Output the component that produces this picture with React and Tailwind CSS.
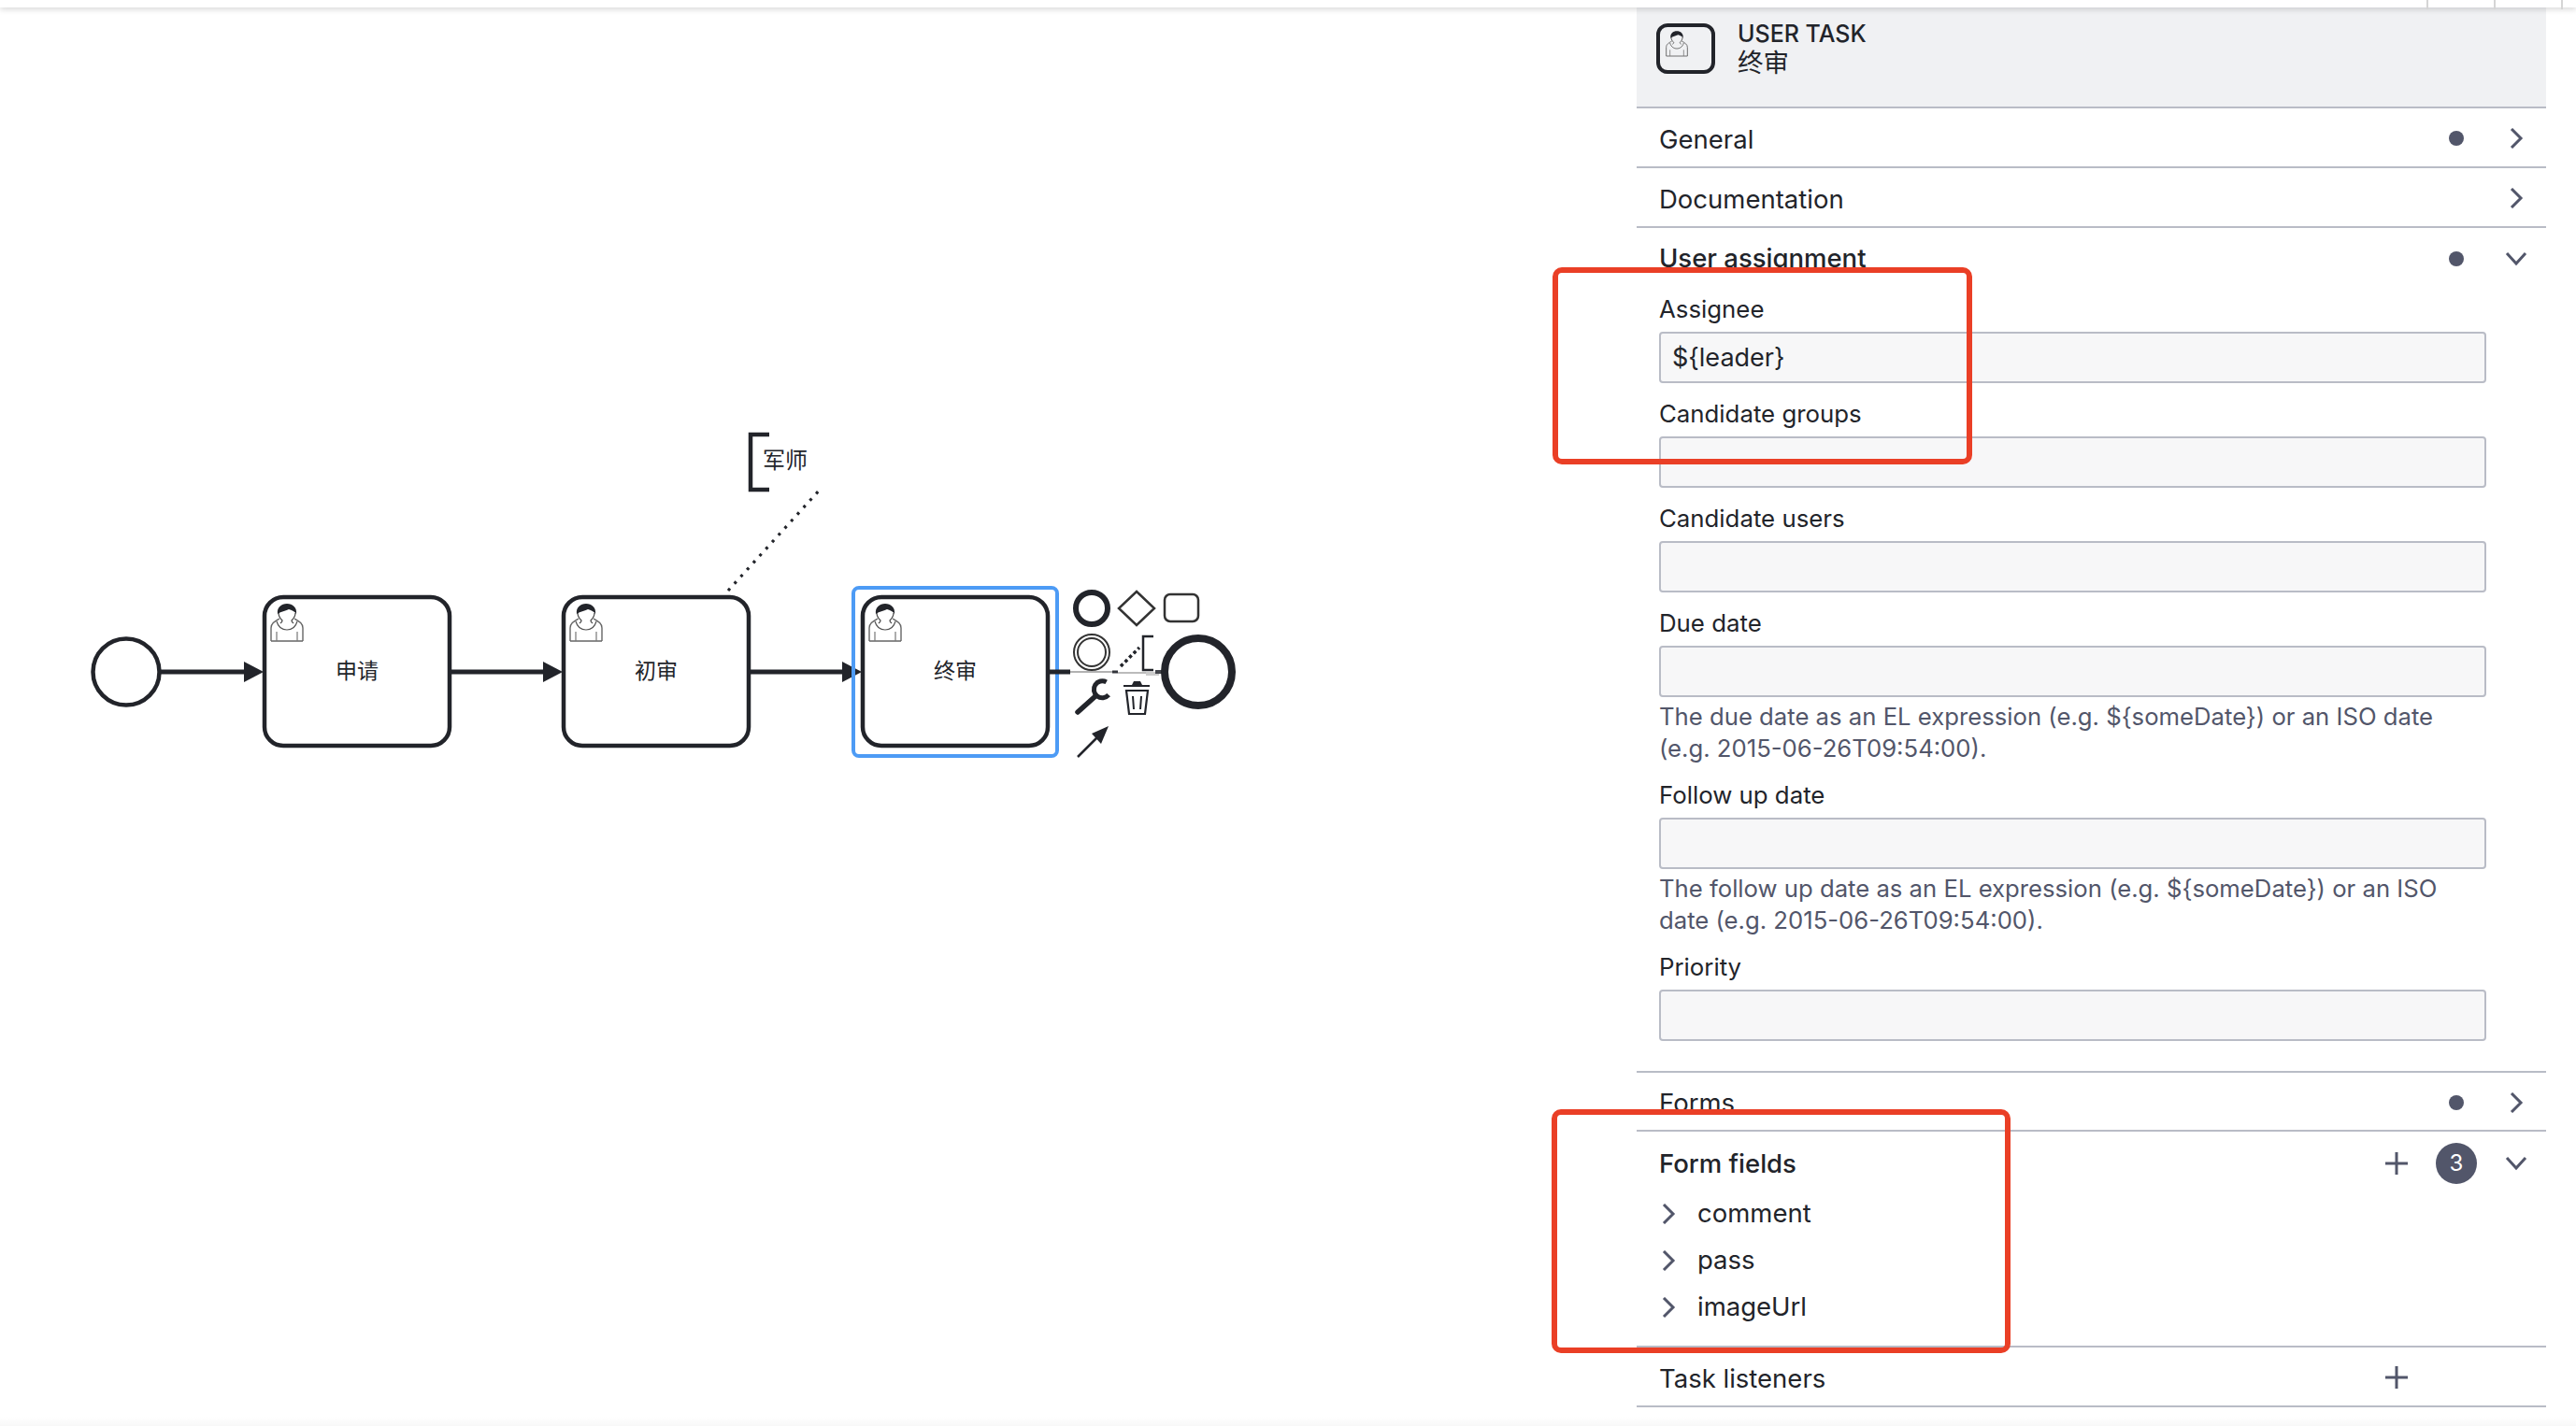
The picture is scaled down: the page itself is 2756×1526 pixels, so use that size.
import React from "react";

const Chevron = ({ down, className = "" }) =>
  down ? (
    <svg width="24" height="16" viewBox="0 0 24 16" className={className}>
      <path d="M2 2 L12 13 L22 2" fill="none" stroke="#52566a" strokeWidth="3" />
    </svg>
  ) : (
    <svg width="16" height="22" viewBox="0 0 16 22" className={className}>
      <path d="M3 1 L13 11 L3 21" fill="none" stroke="#52566a" strokeWidth="3" />
    </svg>
  );

const Plus = () => (
  <svg width="24" height="24" viewBox="0 0 24 24">
    <path d="M12 0 V24 M0 12 H24" stroke="#52566a" strokeWidth="3" />
  </svg>
);

const Dot = () => <span className="w-4 h-4 rounded-full bg-[#52566a]" />;

const UserIcon = ({ x, y, s = 1 }) => (
  <g transform={`translate(${x} ${y}) scale(${s})`} fill="none">
    <path d="M1 40 V26 C1 21 5 19 10 16 M35 40 V26 C35 21 31 19 26 16 M1 40 H35" stroke="#666" strokeWidth="1.4" />
    <path d="M7 30 V40 M29 30 V40" stroke="#777" strokeWidth="1.2" />
    <path d="M7 19 C9 26 14 28 18 28 C22 28 27 26 29 19" stroke="#555" strokeWidth="1.2" />
    <path d="M9 10 C9 14 11 16 13 18 C13 20 12 20 11 21 M27 10 C27 14 25 16 23 18 C23 20 24 20 25 21" stroke="#444" strokeWidth="1.2" />
    <path d="M8 11 C7 4 12 0 18 0 C24 0 29 4 28 11 C26 8 23 7 20 6 C16 8 12 8 8 11 Z" fill="#22242a" />
  </g>
);

const Flow = ({ x1, x2 }) => (
  <g>
    <line x1={x1} y1="719" x2={x2 - 18} y2="719" stroke="#22242a" strokeWidth="5" />
    <polygon points={`${x2 - 20},708 ${x2 + 1},719 ${x2 - 20},730`} fill="#22242a" />
  </g>
);

const Task = ({ x, label }) => (
  <g>
    <rect x={x + 2} y="639" width="198" height="159" rx="20" fill="#fff" stroke="#22242a" strokeWidth="4.5" />
    <UserIcon x={x + 8} y="646" />
    <text x={x + 101} y="726" textAnchor="middle" fontSize="23" fill="#22242a" fontFamily="Inter, 'Noto Sans CJK SC', sans-serif">
      {label}
    </text>
  </g>
);

const Diagram = () => (
  <svg width="1751" height="1518" viewBox="0 8 1751 1518" className="block">
    <circle cx="135" cy="719" r="35.5" fill="#fff" stroke="#22242a" strokeWidth="4.5" />
    <Task x={281} label="申请" />
    <Task x={601} label="初审" />
    <Task x={921} label="终审" />
    <Flow x1={172} x2={281} />
    <Flow x1={483} x2={601} />
    <Flow x1={802} x2={921} />

    <path d="M823 465 H803 V524 H823" fill="none" stroke="#22242a" strokeWidth="4.5" />
    <text x="816" y="501" fontSize="24" fill="#22242a" fontFamily="Inter, 'Noto Sans CJK SC', sans-serif">
      军师
    </text>
    <line x1="779" y1="632" x2="878" y2="523" stroke="#22242a" strokeWidth="3.2" strokeDasharray="3 7" />

    <rect x="913" y="629" width="218" height="180" rx="6" fill="none" stroke="#4d9bf5" strokeWidth="4" />

    {/* outgoing flow fades under the context pad */}
    <line x1="1123" y1="719" x2="1145" y2="719" stroke="#22242a" strokeWidth="5" />
    <line x1="1145" y1="719" x2="1195" y2="719" stroke="#999" strokeWidth="1.5" />
    <line x1="1190" y1="719" x2="1196" y2="719" stroke="#33353b" strokeWidth="3" />
    <line x1="1196" y1="720" x2="1226" y2="720" stroke="#bbb" strokeWidth="2" />
    <line x1="1226" y1="721" x2="1240" y2="721" stroke="#ccc" strokeWidth="4" />
    <line x1="1236" y1="719" x2="1244" y2="719" stroke="#44464c" strokeWidth="4" />
    <circle cx="1282" cy="719" r="36" fill="#fff" stroke="#22242a" strokeWidth="8" />

    {/* context pad */}
    <circle cx="1168" cy="651" r="17" fill="#fff" stroke="#22242a" strokeWidth="6" />
    <polygon points="1216,633 1235,651 1216,669 1197,651" fill="#fff" stroke="#333" strokeWidth="2.5" />
    <rect x="1246" y="636" width="36" height="29" rx="6" fill="#fff" stroke="#333" strokeWidth="2.5" />
    <circle cx="1168" cy="698" r="19" fill="none" stroke="#333" strokeWidth="2" />
    <circle cx="1168" cy="698" r="15" fill="none" stroke="#333" strokeWidth="2" />
    <line x1="1199" y1="713" x2="1219" y2="693" stroke="#22242a" strokeWidth="3.5" strokeDasharray="3.5 3" />
    <path d="M1234 681 H1223 V717 H1234" fill="none" stroke="#22242a" strokeWidth="2.5" />
    <path d="M1185 731 A9 9 0 1 0 1185 745" fill="none" stroke="#22242a" strokeWidth="5" transform="rotate(-10 1178 738)" />
    <line x1="1172" y1="745" x2="1153" y2="762" stroke="#22242a" strokeWidth="5.5" strokeLinecap="round" />
    <path d="M1211 733 L1213 729 H1220 L1222 733 H1230 V735 H1202 V733 Z" fill="#22242a" />
    <path d="M1205 739 L1208 764 H1225 L1228 739 Z" fill="#fff" stroke="#22242a" strokeWidth="2.2" />
    <path d="M1212 745 L1213 759 M1221 745 L1220 759" stroke="#22242a" strokeWidth="2" />
    <line x1="1153" y1="810" x2="1175" y2="788" stroke="#22242a" strokeWidth="2.5" />
    <polygon points="1186,777 1168,785 1178,796" fill="#22242a" />
  </svg>
);

const Section = ({ title, h = "h-[64px]", children }) => (
  <div className={`flex items-center justify-between border-b-2 border-[#b9bcc6] pl-[24px] ${h}`}>
    <span className="pt-[5px] text-[#22242a]">{title}</span>
    <div className="flex items-center pt-[2px]">{children}</div>
  </div>
);

const Field = ({ label, value, help, mt }) => (
  <div className={mt}>
    <label className="block h-[41px] text-[25.8px] leading-[34px] text-[#22242a]">{label}</label>
    <div className="h-[55px] w-[885px] rounded border-2 border-[#b9bcc6] bg-[#f7f7f8] px-[12px] text-[27px] leading-[51px] text-[#22242a]">
      {value}
    </div>
    {help && <p className="mt-[4px] w-[885px] text-[25.7px] leading-[34px] text-[#52566a]">{help}</p>}
  </div>
);

const Item = ({ name, h }) => (
  <div className={`flex items-center pl-[26px] ${h}`}>
    <Chevron />
    <span className="ml-[23px] text-[#22242a]">{name}</span>
  </div>
);

export default function App() {
  return (
    <div className="relative h-[1526px] w-[2756px] overflow-hidden bg-white text-[27.5px] font-['Inter','Noto_Sans_CJK_SC',sans-serif]">
      <div className="relative z-10 flex h-[8px] shadow-[0_2px_6px_rgba(0,0,0,0.16)] bg-white">
        <div className="w-[2596px]" />
        <div className="h-[10px] w-[2px] bg-[#d5d5d5]" />
        <div className="w-[70px]" />
        <div className="h-[10px] w-[2px] bg-[#d5d5d5]" />
        <div className="w-[70px]" />
        <div className="h-[10px] w-[2px] bg-[#d5d5d5]" />
      </div>

      <div className="flex">
        <Diagram />

        <div className="w-[973px]">
          <div className="flex h-[108px] items-start border-b-2 border-[#b9bcc6] bg-[#f0f1f3] pl-[21px] pt-[17px]">
            <div className="flex h-[54px] w-[63px] rounded-[12px] border-4 border-[#22242a] pl-[6px] pt-[4px]">
              <svg width="24" height="28" viewBox="0 0 36 41">
                <UserIcon x={0} y={0} />
              </svg>
            </div>
            <div className="ml-[24px] -mt-[6px]">
              <div className="text-[25px] leading-[34px] font-medium text-[#22242a]">USER TASK</div>
              <div className="leading-[28px] text-[#22242a]">终审</div>
            </div>
          </div>

          <Section title="General">
            <Dot />
            <Chevron className="ml-[48px] mr-[24px]" />
          </Section>
          <Section title="Documentation">
            <Chevron className="mr-[24px]" />
          </Section>

          <div className="flex h-[66px] items-center justify-between pl-[24px]">
            <span className="font-medium text-[#22242a]">User assignment</span>
            <div className="flex items-center">
              <Dot />
              <Chevron down className="ml-[44px] mr-[20px]" />
            </div>
          </div>

          <div className="pl-[24px]">
            <Field label="Assignee" value="${leader}" mt="mt-[4px]" />
            <Field label="Candidate groups" mt="mt-[16px]" />
            <Field label="Candidate users" mt="mt-[16px]" />
            <Field
              label="Due date"
              mt="mt-[16px]"
              help="The due date as an EL expression (e.g. ${someDate}) or an ISO date (e.g. 2015-06-26T09:54:00)."
            />
            <Field
              label="Follow up date"
              mt="mt-[16px]"
              help="The follow up date as an EL expression (e.g. ${someDate}) or an ISO date (e.g. 2015-06-26T09:54:00)."
            />
            <Field label="Priority" mt="mt-[16px]" />
          </div>

          <div className="mt-[32px] border-b-2 border-[#b9bcc6]" />
          <Section title="Forms" h="h-[63px]">
            <Dot />
            <Chevron className="ml-[48px] mr-[24px]" />
          </Section>

          <div className="border-b-2 border-[#b9bcc6] h-[231px]">
            <div className="flex h-[70px] items-center justify-between pl-[24px]">
              <span className="font-medium text-[#22242a]">Form fields</span>
              <div className="flex items-center -mt-[3px]">
                <Plus />
                <span className="ml-[30px] flex h-[44px] w-[44px] items-center justify-center rounded-full bg-[#52566a] text-[24px] text-white">
                  3
                </span>
                <Chevron down className="ml-[30px] mr-[20px]" />
              </div>
            </div>
            <div className="-mt-[7px]">
              <Item name="comment" h="h-[50px]" />
              <Item name="pass" h="h-[50px]" />
              <Item name="imageUrl" h="h-[50px]" />
            </div>
          </div>

          <Section title="Task listeners">
            <Plus />
            <div className="w-[148px]" />
          </Section>
        </div>
      </div>

      {/* hand-drawn highlight boxes over the shot */}
      <div className="absolute left-[1661px] top-[286px] h-[211px] w-[449px] rounded-[10px] border-[6px] border-[#ea3f26]" />
      <div className="absolute left-[1660px] top-[1187px] h-[261px] w-[491px] rounded-[10px] border-[6px] border-[#ea3f26]" />
      <div className="absolute bottom-0 left-0 h-[10px] w-full bg-gradient-to-b from-white to-[#f8f8f8]" />
    </div>
  );
}
